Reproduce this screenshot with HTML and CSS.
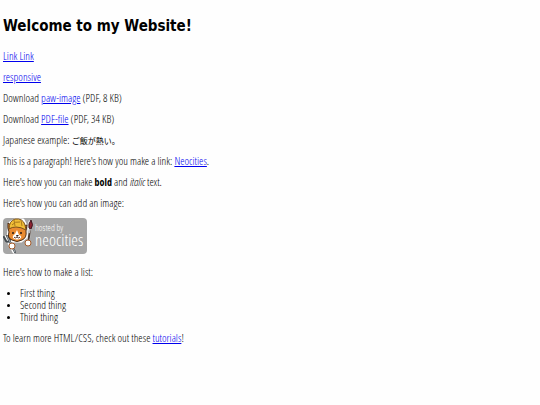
FILE: index.html
```html
<!DOCTYPE html>
<html lang="en">
<head>
  <meta charset="UTF-8">
  <meta name="viewport" content="width=device-width, initial-scale=1.0">
  <title>My Website</title>
  <link rel="stylesheet" href="styles.css">
</head>
<body>
  <h1>Welcome to my Website!</h1>

  <p><a href="link.html">Link Link</a></p>
  <p><a href="responsive.html">responsive</a></p>
  <p>Download <a href="paw.pdf">paw-image</a> (PDF, 8 KB)</p>
  <p>Download <a href="file.pdf">PDF-file</a> (PDF, 34 KB)</p>
  <p>Japanese example: <span class="japanese" lang="ja">ご飯が熱い。</span></p>
  <p>This is a paragraph! Here's how you make a link: <a href="https://neocities.org">Neocities</a>.</p>
  <p>Here's how you can make <strong>bold</strong> and <em>italic</em> text.</p>
  <p>Here's how you can add an image:</p>

  <svg class="logo" viewBox="0 0 84 36" role="img" aria-label="Hosted by Neocities">
    <rect class="logo-plate" width="84" height="36" rx="4"/>
    <!-- white outline behind the cat and its tools -->
    <g fill="#fff" stroke="#fff" stroke-width="3" stroke-linejoin="round" stroke-linecap="round">
      <path d="M6 12L7 5L12 2L20 2L23 8L23 19L18 23H9L5 19Z"/>
      <path d="M27 4L25 26M3 19L11 34M8 27H9"/>
    </g>
    <!-- fork -->
    <path d="M1 19L3 23Q5 25 7 22L6 17M4 18L12 34" fill="none" stroke="#444b50" stroke-width="2" stroke-linecap="round"/>
    <path d="M4 18L12 34" stroke="#a9b0b4" stroke-width="1"/>
    <!-- brush -->
    <path d="M27 12L25 25" stroke="#49382f" stroke-width="2"/>
    <path d="M27 10L26 15" stroke="#bbb" stroke-width="2"/>
    <path d="M28 2Q31 7 28 11L26 10Q25 6 28 2Z" fill="#8f2230" stroke="#3d1820"/>
    <!-- head -->
    <path d="M5 10L5 5L9 8H20L24 7L23 13Q24 20 19 22Q14 25 9 22Q4 20 6 14Z" fill="#e98b32" stroke="#4a2c16"/>
    <path d="M14 12L16 17Q19 18 18 20Q14 23 10 20Q9 18 12 16Z" fill="#fff"/>
    <circle cx="10" cy="15" r="1" fill="#271b16"/>
    <circle cx="18" cy="15" r="1" fill="#271b16"/>
    <path d="M13 17H16L14 19Z" fill="#271b16"/>
    <path d="M14 19Q12 21 11 19M14 19Q16 21 17 19" fill="none" stroke="#5b3627"/>
    <!-- helmet -->
    <path d="M6 11Q6 3 12 1Q20 0 22 7L23 12Q18 9 13 9Q9 9 6 11Z" fill="#f0bd36" stroke="#79501b"/>
    <path d="M9 7Q12 3 17 4M11 2L12 8M18 2L19 8" fill="none" stroke="#a8791d"/>
    <!-- paws -->
    <ellipse cx="9" cy="28" rx="3" ry="3" fill="#fff" stroke="#a55b2a"/>
    <ellipse cx="25" cy="25" rx="3" ry="3" fill="#fff" stroke="#a55b2a"/>
    <text class="logo-small" x="32" y="13">hosted by</text>
    <text class="logo-big" x="32" y="28">neocities</text>
  </svg>

  <p>Here's how to make a list:</p>

  <ul>
    <li>First thing</li>
    <li>Second thing</li>
    <li>Third thing</li>
  </ul>

  <p>To learn more HTML/CSS, check out these <a href="https://neocities.org/tutorials">tutorials</a>!</p>
</body>
</html>
```
FILE: styles.css
```css
body {
  margin: 0;
  padding: 1px 3px;
  background-color: #fefefe;
  color: #000;
  font-family: "Open Sans Condensed Light", "Noto Sans CJK JP", sans-serif;
  font-size: 11px;
  line-height: 12px;
}

h1 {
  margin: 13px 0 12px;
  font-family: "DejaVu Sans Condensed", sans-serif;
  font-size: 15px;
  line-height: 24px;
}

p {
  margin: 9px 0;
}

.japanese {
  font-size: 8px;
  line-height: 8px;
}

strong {
  font-family: "Open Sans Condensed", sans-serif;
  font-size: 10px;
  line-height: 10px;
}

ul {
  margin: 9px 0;
  padding-left: 17px;
}

li::marker {
  font-size: 8px;
}

.logo {
  display: block;
  width: 84px;
  height: 36px;
  margin-bottom: 12px;
}

.logo-plate {
  fill: #a6a6a6;
}

.logo-small {
  fill: #fff;
  font-size: 9px;
}

.logo-big {
  fill: #fff;
  font-size: 17px;
}
```
